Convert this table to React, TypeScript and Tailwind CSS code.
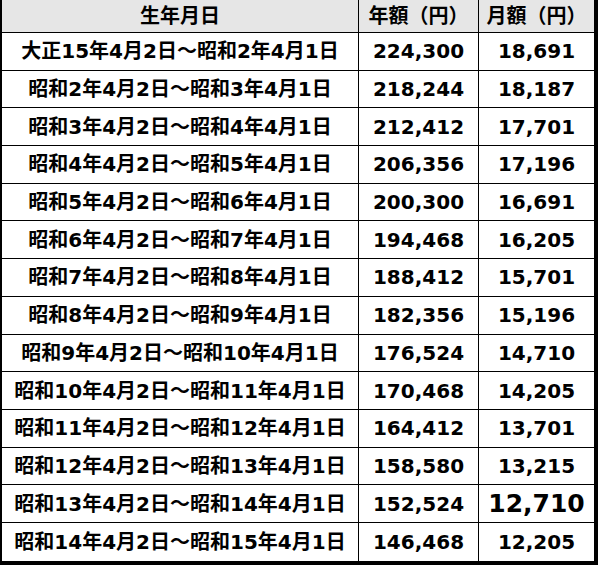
const rows: [string, string, string][] = [
  ["大正15年4月2日～昭和2年4月1日", "224,300", "18,691"],
  ["昭和2年4月2日～昭和3年4月1日", "218,244", "18,187"],
  ["昭和3年4月2日～昭和4年4月1日", "212,412", "17,701"],
  ["昭和4年4月2日～昭和5年4月1日", "206,356", "17,196"],
  ["昭和5年4月2日～昭和6年4月1日", "200,300", "16,691"],
  ["昭和6年4月2日～昭和7年4月1日", "194,468", "16,205"],
  ["昭和7年4月2日～昭和8年4月1日", "188,412", "15,701"],
  ["昭和8年4月2日～昭和9年4月1日", "182,356", "15,196"],
  ["昭和9年4月2日～昭和10年4月1日", "176,524", "14,710"],
  ["昭和10年4月2日～昭和11年4月1日", "170,468", "14,205"],
  ["昭和11年4月2日～昭和12年4月1日", "164,412", "13,701"],
  ["昭和12年4月2日～昭和13年4月1日", "158,580", "13,215"],
  ["昭和13年4月2日～昭和14年4月1日", "152,524", "12,710"],
  ["昭和14年4月2日～昭和15年4月1日", "146,468", "12,205"],
]

export default function App() {
  return (
    <div className="w-[600px] h-[567px] bg-white">
      <div
        className="w-[598px] border-l-2 border-r-4 border-b-4 border-black text-black font-bold text-[20px]"
        style={{ fontFamily: '"DejaVu Sans", "Noto Sans CJK JP", sans-serif' }}
      >
        {/* header */}
        <div className="flex h-[33px] bg-[#e6e6e6] border-b border-black leading-none">
          <div className="w-[357px] border-r border-black flex items-center justify-center">生年月日</div>
          <div className="w-[120px] border-r border-black flex items-center justify-center">年額（円）</div>
          <div className="flex-1 flex items-center justify-center">月額（円）</div>
        </div>
        {rows.map(([date, year, month], i) => (
          <div
            key={i}
            className={`flex h-[37.7px] leading-none ${i < rows.length - 1 ? "border-b border-black" : ""}`}
          >
            <div className="w-[357px] border-r border-black flex items-center justify-center">{date}</div>
            <div className="w-[120px] border-r border-black flex items-center justify-center">{year}</div>
            <div className={`flex-1 flex items-center justify-center ${month === "12,710" ? "text-[25px]" : ""}`}>
              {month}
            </div>
          </div>
        ))}
      </div>
    </div>
  )
}
